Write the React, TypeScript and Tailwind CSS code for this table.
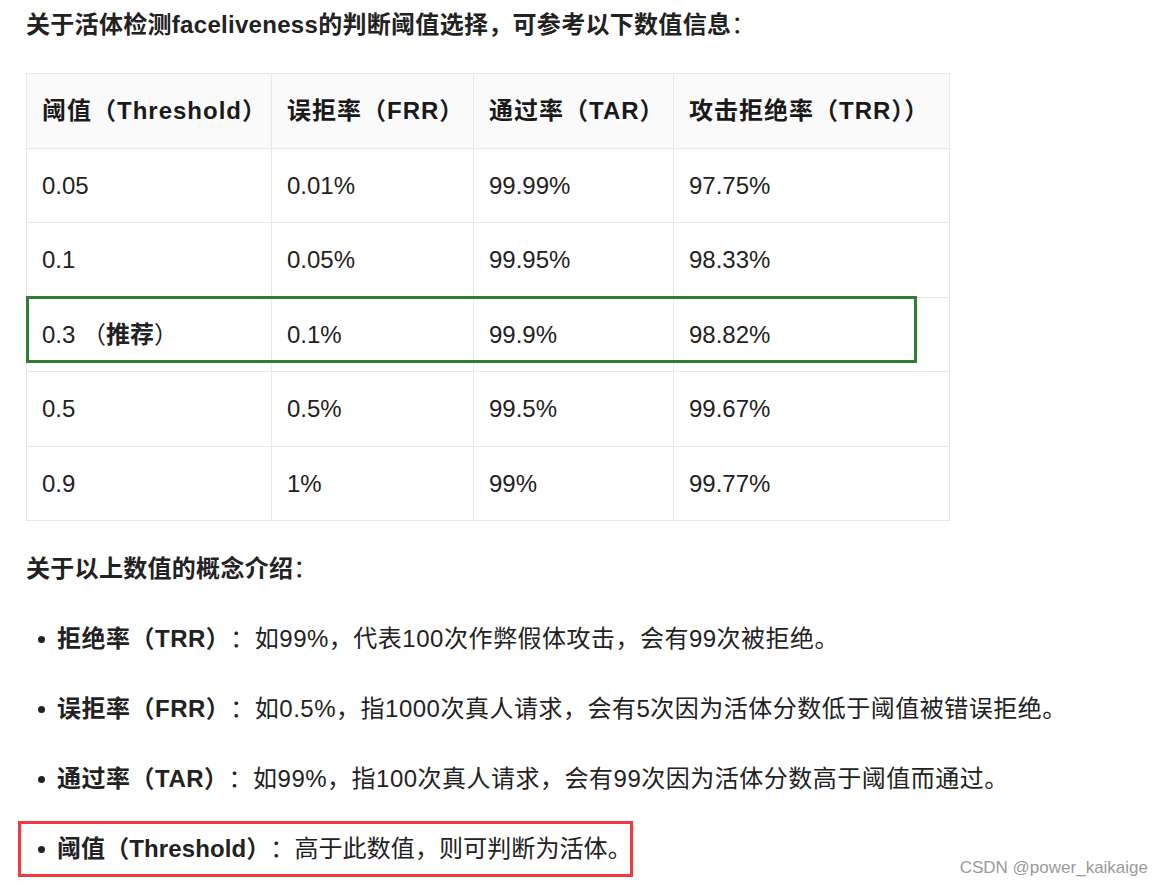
import React from "react";

const FONT = { fontFamily: '"Liberation Sans", "Noto Sans CJK SC", sans-serif' };

const rows = [
  ["0.05", "0.01%", "99.99%", "97.75%"],
  ["0.1", "0.05%", "99.95%", "98.33%"],
  ["0.3", "0.1%", "99.9%", "98.82%"],
  ["0.5", "0.5%", "99.5%", "99.67%"],
  ["0.9", "1%", "99%", "99.77%"],
];
const rowH = ["h-[74px]", "h-[75px]", "h-[74px]", "h-[75px]", "h-[74px]"];

function Bullet() {
  return <span className="inline-block w-[7px] h-[7px] rounded-full bg-[#222] mr-[12px] ml-[12px]" />;
}

export default function App() {
  return (
    <div className="relative w-[1162px] h-[888px] bg-white text-[#222] overflow-hidden" style={FONT}>
      <div className="h-[50px] flex items-center pl-[26px] text-[24px] tracking-[0.3px]">
        <span className="font-bold">关于活体检测faceliveness的判断阈值选择，可参考以下数值信息</span>
        <span>：</span>
      </div>

      <div className="relative ml-[26px] mt-[23px] w-[923px]">
        <table className="border-collapse text-[24px] w-[923px] table-fixed">
          <colgroup>
            <col className="w-[245px]" />
            <col className="w-[202px]" />
            <col className="w-[200px]" />
            <col className="w-[276px]" />
          </colgroup>
          <thead>
            <tr className="h-[75px] bg-[#fafafa]">
              {["阈值（Threshold）", "误拒率（FRR）", "通过率（TAR）", "攻击拒绝率（TRR））"].map((h) => (
                <th key={h} className="border border-[#e8e8e8] text-left font-bold pl-[15px] whitespace-nowrap text-[#1a1a1a] tracking-[1px]">
                  {h}
                </th>
              ))}
            </tr>
          </thead>
          <tbody>
            {rows.map((r, i) => (
              <tr key={i} className={rowH[i]}>
                {r.map((c, j) => (
                  <td key={j} className="border border-[#e8e8e8] pl-[15px] whitespace-nowrap">
                    {i === 2 && j === 0 ? (
                      <>
                        0.3 （<span className="font-bold">推荐</span>）
                      </>
                    ) : (
                      c
                    )}
                  </td>
                ))}
              </tr>
            ))}
          </tbody>
        </table>
        <div className="absolute left-0 top-[223px] w-[891px] h-[67px] border-[3px] border-[#2e7d32]" />
      </div>

      <div className="mt-[24px] h-[48px] flex items-center pl-[26px] text-[24px] tracking-[0.3px]">
        <span className="font-bold">关于以上数值的概念介绍</span>
        <span>：</span>
      </div>

      <ul className="mt-[11px] text-[24px] tracking-[0.5px]">
        <li className="h-[70px] flex items-center pl-[26px]">
          <Bullet />
          <span className="font-bold">拒绝率（TRR）</span>
          <span>：如99%，代表100次作弊假体攻击，会有99次被拒绝。</span>
        </li>
        <li className="h-[70px] flex items-center pl-[26px]">
          <Bullet />
          <span className="font-bold">误拒率（FRR）</span>
          <span>：如0.5%，指1000次真人请求，会有5次因为活体分数低于阈值被错误拒绝。</span>
        </li>
        <li className="h-[70px] flex items-center pl-[26px]">
          <Bullet />
          <span className="font-bold">通过率（TAR）</span>
          <span>：如99%，指100次真人请求，会有99次因为活体分数高于阈值而通过。</span>
        </li>
        <li className="h-[70px] flex items-center pl-[18px]">
          <div className="w-[615px] h-[56px] flex items-center border-[3px] border-[#ef3b3f] whitespace-nowrap overflow-visible tracking-[0.1px]">
            <span className="inline-block w-[7px] h-[7px] rounded-full bg-[#222] mr-[12px] ml-[17px] shrink-0" />
            <span className="font-bold shrink-0">阈值（Threshold）</span>
            <span className="shrink-0">：高于此数值，则可判断为活体。</span>
          </div>
        </li>
      </ul>

      <div className="absolute right-[14px] bottom-[8px] text-[17px] text-[#9a9a9a]" style={FONT}>
        CSDN @power_kaikaige
      </div>
    </div>
  );
}
